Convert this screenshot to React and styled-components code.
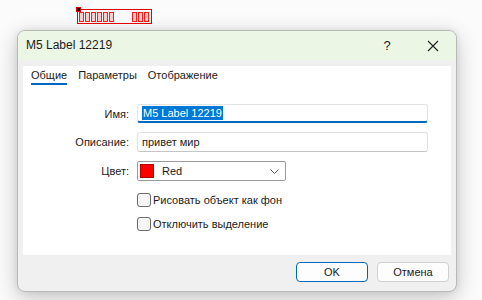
import React from 'react'
import styled, { createGlobalStyle } from 'styled-components'

const GlobalStyle = createGlobalStyle`
  html, body { margin: 0; padding: 0; }
  body {
    background: #fbfbfb;
    font-family: "Liberation Sans", Arial, sans-serif;
    font-size: 11px;
    color: #1b1b1b;
  }
`

const Stage = styled.div`
  width: 482px;
  height: 300px;
  overflow: hidden;
  padding-top: 9px;
  box-sizing: border-box;
`

const ChartLabel = styled.div`
  position: relative;
  margin-left: 77px;
  width: 75px;
  height: 15px;
  box-sizing: border-box;
  border: 1px solid #e00000;
  display: flex;
  align-items: center;
  padding: 1px 0 0 1px;
  gap: 1px;
`

const Anchor = styled.span`
  position: absolute;
  left: -2px;
  top: -3px;
  width: 3px;
  height: 3px;
  background: #000;
  border: 1px solid #e00000;
`

const Tofu = styled.span`
  display: inline-block;
  box-sizing: border-box;
  width: 5px;
  height: 10px;
  border: 1px solid #ff1a1a;
  background: rgba(255, 120, 120, 0.35);
  margin-left: ${p => (p.$space ? '17px' : '0')};
`

const Dialog = styled.div`
  margin: 6px 0 0 17px;
  width: 440px;
  height: 262px;
  box-sizing: border-box;
  border: 1px solid #b9b9b9;
  border-radius: 8px;
  overflow: hidden;
  background: #f0f0f0;
  display: flex;
  flex-direction: column;
  box-shadow: 0 6px 22px rgba(0, 0, 0, 0.22), 0 0 6px rgba(0, 0, 0, 0.08);
`

const TitleBar = styled.div`
  height: 29px;
  flex: none;
  background: #ebf6e5;
  display: flex;
  align-items: center;
  padding: 0 0 0 8px;
`

const Title = styled.div`
  flex: 1;
  font-size: 12px;
  padding-bottom: 2px;
`

const TitleButton = styled.div`
  width: 46px;
  height: 29px;
  display: flex;
  align-items: center;
  justify-content: center;
  font-size: 13px;
  color: #222;
`

const Body = styled.div`
  flex: 1;
  display: flex;
  flex-direction: column;
  padding: 6px 5px 0 5px;
`

const Panel = styled.div`
  height: 189px;
  background: #fff;
  display: flex;
  flex-direction: column;
`

const Tabs = styled.div`
  display: flex;
  gap: 11px;
  padding: 0 0 0 8px;
  height: 20px;
`

const Tab = styled.div`
  padding-top: 2px;
  line-height: 15px;
  color: #1b1b1b;
  border-bottom: 2px solid ${p => (p.$active ? '#0067c0' : 'transparent')};
  align-self: flex-start;
`

const Form = styled.div`
  display: grid;
  grid-template-columns: 106px 291px;
  column-gap: 8px;
  row-gap: 9px;
  align-items: center;
  margin-top: 18px;
`

const Label = styled.div`
  text-align: right;
`

const Field = styled.div`
  height: ${p => (p.$active ? '19px' : '20px')};
  box-sizing: border-box;
  border: 1px solid #e3e3e3;
  border-bottom: ${p => (p.$active ? '2px solid #0067c0' : '1px solid #c4c4c4')};
  border-radius: 3px;
  display: flex;
  align-items: center;
  padding-left: 4px;
`

const Selected = styled.span`
  background: #0078d7;
  color: #fff;
  padding: 0 1px;
  line-height: 14px;
`

const Select = styled.div`
  width: 149px;
  height: 20px;
  box-sizing: border-box;
  border: 1px solid #9a9a9a;
  border-radius: 2px;
  display: flex;
  align-items: center;
  padding: 0 6px 0 2px;
`

const Swatch = styled.span`
  width: 12px;
  height: 12px;
  background: ${p => p.$color};
  border: 1px solid #b00000;
  margin-right: 8px;
`

const SelectText = styled.span`
  flex: 1;
`

const Checks = styled.div`
  display: flex;
  flex-direction: column;
  gap: 11px;
  margin: 12px 0 0 114px;
`

const CheckRow = styled.label`
  display: flex;
  align-items: center;
  gap: 2px;
  height: 13px;
`

const Box = styled.span`
  width: 12px;
  height: 12px;
  border: 1px solid #6f6f6f;
  border-radius: 3px;
  background: #f7f7f7;
`

const Footer = styled.div`
  display: flex;
  justify-content: flex-end;
  gap: 9px;
  padding: 7px 2px 0 0;
`

const Button = styled.div`
  width: 72px;
  height: 20px;
  box-sizing: border-box;
  border: 1px solid ${p => (p.$primary ? '#0067c0' : '#d0d0d0')};
  border-radius: 4px;
  background: #fdfdfd;
  display: flex;
  align-items: center;
  justify-content: center;
`

export default function App() {
  return (
    <Stage>
      <GlobalStyle />
      <ChartLabel>
        <Anchor />
        {[0, 1, 2, 3, 4, 5].map(i => <Tofu key={i} />)}
        <Tofu $space />
        <Tofu />
        <Tofu />
      </ChartLabel>

      <Dialog>
        <TitleBar>
          <Title>M5 Label 12219</Title>
          <TitleButton>?</TitleButton>
          <TitleButton>
            <svg width="12" height="12" viewBox="0 0 12 12">
              <path d="M1 1 L11 11 M11 1 L1 11" stroke="#222" strokeWidth="1.1" fill="none" />
            </svg>
          </TitleButton>
        </TitleBar>

        <Body>
          <Panel>
            <Tabs>
              <Tab $active>Общие</Tab>
              <Tab>Параметры</Tab>
              <Tab>Отображение</Tab>
            </Tabs>

            <Form>
              <Label>Имя:</Label>
              <Field $active><Selected>M5 Label 12219</Selected></Field>
              <Label>Описание:</Label>
              <Field>привет мир</Field>
              <Label>Цвет:</Label>
              <Select>
                <Swatch $color="#ff0000" />
                <SelectText>Red</SelectText>
                <svg width="9" height="5" viewBox="0 0 9 5">
                  <path d="M0.5 0.5 L4.5 4.5 L8.5 0.5" stroke="#555" strokeWidth="1" fill="none" />
                </svg>
              </Select>
            </Form>

            <Checks>
              <CheckRow><Box />Рисовать объект как фон</CheckRow>
              <CheckRow><Box />Отключить выделение</CheckRow>
            </Checks>
          </Panel>

          <Footer>
            <Button $primary>OK</Button>
            <Button>Отмена</Button>
          </Footer>
        </Body>
      </Dialog>
    </Stage>
  )
}
